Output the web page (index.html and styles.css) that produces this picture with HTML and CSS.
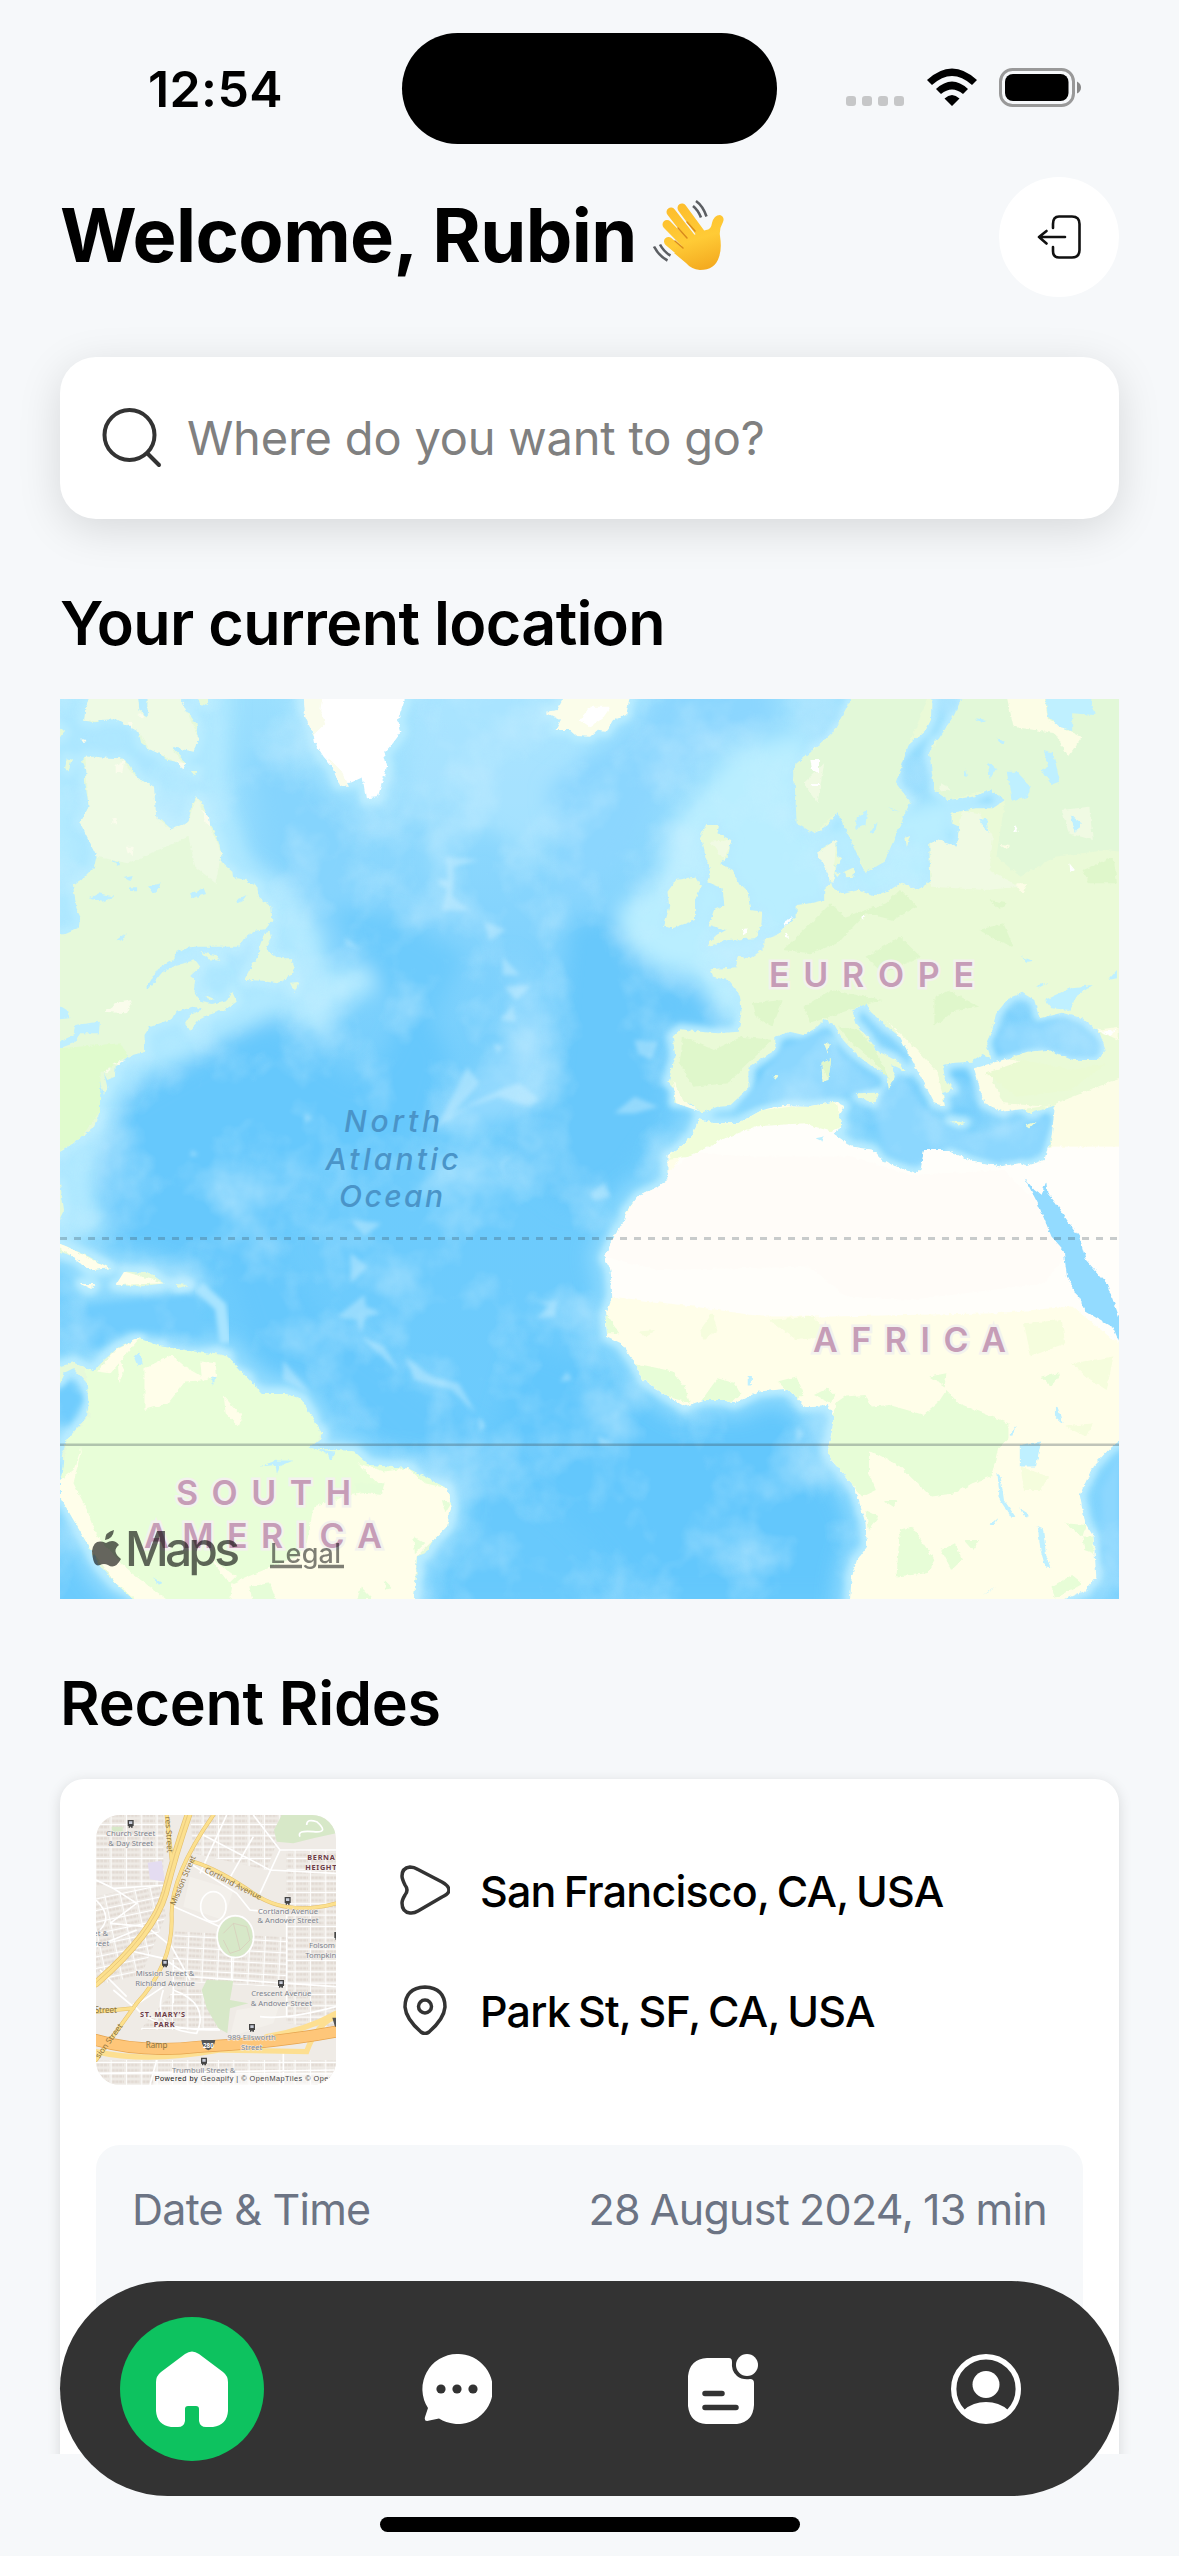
FILE: index.html
```html
<!DOCTYPE html>
<html lang="en">
<head>
<meta charset="utf-8">
<title>Ride Home</title>
<link rel="stylesheet" href="styles.css">
</head>
<body>
<div class="screen">
  <header class="status">
    <div class="time"><span class="t-time">12:54</span></div>
    <div class="island"></div>
    <div class="indicators">
      <div class="dots"><i></i><i></i><i></i><i></i></div>
      <svg class="wifi" viewBox="0 0 52 38"><path d="M1 12Q26-11 51 12L46 17Q26-1 6 17ZM10 21Q26 6 42 21L37 26Q26 17 15 26ZM18.500 30.500Q26 23.500 33.500 30.500L26 38Z"/></svg>
      <svg class="battery" viewBox="0 0 83 40"><rect x="1.500" y="1.500" width="73" height="36" rx="12" fill="none" stroke="#999" stroke-width="3"/><rect x="6" y="6" width="63.500" height="27" rx="8"/><path d="M78 13.500Q82 15.500 82 19.500T78 25.500Z" fill="#888"/></svg>
    </div>
  </header>

  <main class="content">
    <div class="welcome">
      <h1 class="t-title">Welcome, Rubin</h1>
      <svg class="wave" viewBox="0 0 110 110">
        <defs><linearGradient id="skin" gradientUnits="userSpaceOnUse" x1="40" y1="22" x2="62" y2="92"><stop offset="0" stop-color="#fdbd2c"/><stop offset=".55" stop-color="#ffcb36"/><stop offset="1" stop-color="#f3a81e"/></linearGradient></defs>
        <g fill="none" stroke="url(#skin)" stroke-linecap="round">
          <path stroke-width="9" d="M42 28L64 58"/><path stroke-width="9" d="M31 32L56 64"/><path stroke-width="9" d="M27 44.500L50 68"/><path stroke-width="9" d="M28.500 61.500L48 78"/>
        </g>
        <path fill="url(#skin)" d="M40 72L44 60 60 52 66 50Q71 50 72 43Q74 35 80 35Q85 37 83 42Q79 49 80 56Q82 69 79 77Q75 90 60 90Q51 89 46 83L34 73Z"/>
        <path d="M47 42L55 51M38 48L47 58M35 61L43 68" fill="none" stroke="#d98b1c" stroke-width="1.500" stroke-linecap="round"/>
        <g fill="none" stroke="#5c5f63" stroke-width="2.600"><path d="M56 21Q63 26 66.500 36.500M53 26Q58 30 61 37.500M14 66.500Q19 76 27.500 80.500M20 64.500Q24 72 30.500 75.500"/></g>
      </svg>
      <button class="logout"><svg viewBox="0 0 44 44" fill="none" stroke="#111" stroke-width="2.600" stroke-linecap="round" stroke-linejoin="round"><path d="M16 13V9Q16 1.500 22 1.500H35Q42.500 1.500 42.500 9V35Q42.500 42.500 35 42.500H22Q16 42.500 16 36V32M28 22H2M9.500 16L2 22L9.500 28.500"/></svg></button>
    </div>

    <div class="search">
      <svg viewBox="0 0 60 60" fill="none" stroke="#333" stroke-width="4" stroke-linecap="round"><circle cx="27.500" cy="27" r="25"/><path d="M46 46L57 57"/></svg>
      <span class="t-search">Where do you want to go?</span>
    </div>

    <h2 class="t-loc">Your current location</h2>

    <div class="map">
      <svg viewBox="60 699 1059 900">
        <defs>
          <filter id="rough" x="-5%" y="-5%" width="110%" height="110%" color-interpolation-filters="sRGB"><feTurbulence type="fractalNoise" baseFrequency=".07" numOctaves="3" seed="4"/><feDisplacementMap in="SourceGraphic" scale="12" xChannelSelector="R" yChannelSelector="G"/></filter>
          <filter id="soft" x="-20%" y="-20%" width="140%" height="140%"><feGaussianBlur stdDeviation="10"/></filter>
          <filter id="softer" x="-30%" y="-30%" width="160%" height="160%"><feGaussianBlur stdDeviation="30"/></filter>
          <filter id="fine"><feGaussianBlur stdDeviation="7"/></filter>
          <filter id="relief" x="0" y="0" width="100%" height="100%" color-interpolation-filters="sRGB"><feTurbulence type="fractalNoise" baseFrequency=".014" numOctaves="4" seed="9"/><feColorMatrix values="0 0 0 0 .8  0 0 0 0 .94  0 0 0 0 1  1.6 0 0 0 -.72"/></filter>
          <linearGradient id="sea" x1="0" y1="0" x2="0" y2="1"><stop offset="0" stop-color="#9bdffe"/><stop offset=".25" stop-color="#83d3fd"/><stop offset=".5" stop-color="#6dcbfc"/><stop offset="1" stop-color="#6ccbfd"/></linearGradient>
          <g id="america">
            <path d="M95 0L75 55 72 92 105 97 130 82 165 88 172 70 190 90 215 98 232 125 240 158 265 178 290 185 312 208 345 216 370 228 365 208 330 170 300 130 345 150 380 172 395 185 410 140 405 105 380 68 345 45 345 0H260L258 50 262 80 235 62 228 0Z"/>
            <path d="M75 200L110 200 140 212 180 205 210 228 228 265 278 290 275 340 285 385 270 398 300 390 330 418 380 398 388 350 405 318 425 350 445 405 465 440 478 490 475 515 510 545 512 562 550 570 583 590 590 625 625 650 628 690 605 718 578 722 545 745 528 770 390 770 345 785 335 810 290 835 255 895 262 898 300 850 345 825 400 810 415 830 385 858 400 870 395 905 415 935 450 942 495 930 508 902 523 935 490 958 440 975 410 990 385 1022 370 998 385 975 425 958 395 950 345 965 335 985 265 1012 250 1035 252 1085 200 1100 165 1130 162 1160 140 1170 130 1150 140 1190 130 1215 115 1160 105 1180 110 1240 118 1265 100 1310 60 1345 10 1380 -60 1420V735L15 733 55 715 60 680 50 660 38 585 75 560 100 535 110 490 100 430 60 400 85 350 78 300 72 265 80 245 65 210Z"/>
            <path d="M620 725L605 730 590 770 588 800 565 830 545 870 600 872 640 880 665 870 690 850 695 835 682 805 645 805 620 785 610 770 625 745ZM680 878L706 876 694 906ZM415 785L460 795 475 812 440 808ZM430 915L458 928 440 930ZM20 205L35 210 25 242 15 235ZM390 243L408 243 400 256ZM405 25H438V48L410 40ZM-20 100L12 125 0 142-20 140Z"/>
            <path d="M-30 1480H0L12 1560 0 1585-30 1590ZM-30 1650L20 1670 85 1700 148 1735 90 1740 50 1705 0 1685-30 1680ZM190 1745L265 1750 310 1780 235 1790 165 1785 215 1778ZM65 1782L100 1785 90 1796ZM345 1782L378 1785 350 1795Z"/>
            <path d="M-30 2050L0 2030 40 2018 75 2035 100 2045 130 2010 170 1975 235 1945 230 1985 265 1970 300 1970 320 1990 380 2000 460 1990 495 2000 500 2035 555 2065 560 2090 600 2112 670 2112 715 2130 745 2180 752 2210 775 2230 770 2250 740 2275 820 2280 870 2285 915 2325 960 2330 1030 2335 1080 2380 1145 2395 1158 2450 1145 2510 1105 2550 1080 2590 1055 2600 1055 2650 1045 2727V2760H250L240 2720 165 2680 120 2630 80 2560 30 2460 0 2420 5 2360 30 2340 5 2300 20 2250 80 2180 88 2110 80 2080 40 2035 10 2050 0 2080-30 2070Z"/>
          </g>
          <path id="greenland" d="M720 0L725 60 745 100 755 160 780 200 805 230 825 280 860 278 895 262 905 325 940 322 955 270 968 230 958 190 985 160 1010 125 1000 90 1015 45 1030 0Z"/>
          <g id="europe">
            <path d="M772 0L745 60 735 95 705 130 700 150 650 175 635 200 600 230 592 270 640 280 600 290 595 330 610 360 605 400 650 430 680 415 720 365 740 370 755 430 775 480 785 520 800 548 818 530 855 515 870 440 880 405 905 375 930 335 900 300 888 280 890 210 925 165 975 120 990 90 992 0Z"/>
            <path d="M1090 0V60L1055 80 1035 110 1025 140 1000 155 985 190 1000 260 1000 300 1040 330 1110 320 1165 300 1205 330 1170 355 1120 355 1050 368 1050 400 1072 410 1065 470 1030 470 1010 450 985 460 988 575 950 600 905 578 870 600 820 618 780 600 735 612 705 595 690 540 665 500 675 475 715 450 718 495 732 505 712 530 708 570 680 600 680 630 640 640 600 645 600 680 560 715 545 735 505 750 500 780 465 805 428 800 425 832 350 838 358 860 400 870 435 915 440 960 432 1025 370 1030 320 1025 262 1018 240 1040 248 1100 228 1175 248 1200 245 1238 290 1240 325 1268 370 1250 405 1248 460 1195 460 1130 500 1105 538 1080 538 1040 580 1025 620 1035 655 1015 680 990 710 1005 735 1050 775 1095 820 1130 860 1150 868 1200 885 1160 875 1125 918 1145 895 1115 830 1080 805 1040 770 1000 762 960 800 942 815 965 850 1000 900 1040 945 1090 945 1130 975 1180 1000 1240 1030 1248 1025 1210 1055 1198 1030 1165 1025 1125 1060 1118 1110 1115 1140 1095 1165 1108 1150 1060 1168 1020 1180 970 1215 925 1255 908 1290 930 1305 985 1370 968 1430 985 1480 1030 1498 1080 1475 1110 1400 1110 1330 1080 1270 1085 1215 1105 1180 1130 1115 1135 1135 1180 1145 1240 1200 1265 1230 1245 1280 1270 1355 1245 1350 1300 1330 1380V1440H1640V0Z"/>
            <path d="M338 405L375 405 370 430 410 450 400 500 378 520 415 540 430 580 458 605 465 660 500 665 498 700 480 745 400 750 335 770 370 735 395 720 345 705 360 660 390 645 385 595 340 575 350 540 335 500 330 470 320 440ZM250 570L305 560 322 590 305 630 305 690 240 715 215 710 230 650 225 605ZM680 1062L697 1060 690 1088ZM672 1120L700 1108 692 1170 675 1175ZM775 1210L840 1208 828 1240 780 1222ZM1045 1293L1090 1298 1070 1307ZM1262 1307L1294 1296 1275 1316ZM738 545L770 530 765 560 745 562ZM708 545L728 550 718 562ZM915 440L930 435 920 468ZM530 1155H547L538 1166Z"/>
          </g>
          <path id="iceland" d="M-128 65L-95 60-80 30-60 0H120L105 75 70 90 45 125 20 122 0 140-40 138-60 120-100 120-85 90-125 70Z"/>
          <path id="africa" d="M315 1288L360 1300 430 1300 500 1260 560 1245 640 1248 690 1240 712 1235 738 1248 722 1275 732 1310 705 1330 760 1370 820 1380 850 1415 940 1450 960 1440 970 1380 1035 1380 1100 1410 1190 1430 1250 1420 1270 1428 1320 1410 1330 1370 1640 1370V2240L1535 2255 1505 2280 1460 2330 1422 2415 1438 2500 1462 2540 1470 2660 1440 2700 1380 2727V2760H755V2727L760 2660 775 2610 805 2570 800 2500 780 2430 760 2380 700 2310 688 2280 700 2240 710 2180 690 2145 620 2150 590 2110 560 2098 490 2105 420 2140 380 2130 330 2130 275 2150 225 2120 155 2070 130 2020 90 1960 50 1940 45 1880 65 1820 60 1740 42 1705 70 1640 100 1590 105 1565 140 1520 200 1490 225 1470 225 1400 270 1365 300 1330Z"/>
          <clipPath id="inAfrica"><use href="#africa"/></clipPath>
        </defs>
        <rect x="60" y="699" width="1059" height="900" fill="url(#sea)"/>

        <g transform="translate(60 690) scale(.338 .3333)">
          <g filter="url(#softer)">
            <path fill="#b5ebff" d="M-60-40H500L495 300 550 490 600 560 710 580 770 720 790 850 920 820 940 890 800 960 790 1050 660 960 480 1035 370 1110 230 1150 160 1250 120 1370 100 1500 140 1620-60 1700Z"/>
            <path fill="#66c8fc" d="M620 1000L730 1080 880 1180 960 1100 1050 900 1150 1100 1100 1300 900 1450 700 1500 650 1700 800 1900 1000 2050 1200 2200 1300 2250 1000 2300 850 2150 600 2050 500 1750 200 1650 120 1450 180 1250 350 1150Z"/>
            <path fill="#6dcbfc" d="M800 650L950 900 1100 1000 1200 800 1000 680Z"/><path fill="#67c9fc" d="M1150 2300L1568 2250 1700 2730H1060L1180 2500Z"/>
            <path fill="#85d4fd" d="M560 200L760 280 900 400 880 550 760 720 620 500Z"/>
            <path fill="#b0e7ff" opacity=".65" d="M1050-60L1568-60V330L1400 500 1250 400 1150 480 1150 650 1100 500 1200 300 1000 400Z"/>
            <path fill="#a6e1ff" opacity=".6" d="M1330 780L1360 1000 1220 1180 1100 1320 1400 1280 1450 1000Z"/>
          </g>
          <g fill="#a9e5ff" stroke="#a9e5ff" stroke-width="100" stroke-linejoin="round" filter="url(#softer)" opacity=".7"><use href="#america"/><use href="#greenland"/></g>
          <g fill="#b8ecff" stroke="#b8ecff" stroke-width="40" stroke-linejoin="round" filter="url(#soft)"><use href="#america"/><use href="#greenland"/></g>
          <path filter="url(#soft)" fill="#6fccfd" d="M20 1950L80 1850 220 1830 410 1810 420 1940 200 1920 100 1980ZM-20 2110L40 2070 70 2130 20 2210-20 2200Z"/>
          <path filter="url(#fine)" fill="none" stroke="#a8e4ff" stroke-width="34" d="M410 1790L475 1850 490 1960"/>
        </g>
        <g transform="translate(590 690) scale(.3444 .3333)">
          <g filter="url(#softer)">
            <path fill="#b9eeff" d="M420 180L640 120 620 420 1100 300 1000 640 700 660 500 830 440 1020 360 950 300 850 210 840 150 800 90 740 80 660 200 570 240 400 350 260Z"/>
            <path fill="#67c8fb" d="M-60 700L70 680 110 790 200 870 330 920 390 1010 220 1000 200 1300 100 1450-60 1560-260 1400-100 1150Z"/>
            <path fill="#64c7fc" d="M-200 1950L10 2030 130 2090 240 2170 440 2160 560 2120 660 2200 680 2330 760 2500 720 2730H150L-60 2500-300 2300Z"/>
            <path fill="#8bd6fe" d="M280-60H520L540 100 380 150 200 300 100 500-60 640-120 300Z"/>
          </g>
          <g fill="#a9e5ff" stroke="#a9e5ff" stroke-width="90" stroke-linejoin="round" filter="url(#softer)" opacity=".6"><use href="#iceland"/><use href="#africa"/></g>
          <g fill="#b8ecff" stroke="#b8ecff" stroke-width="34" stroke-linejoin="round" filter="url(#soft)"><use href="#europe"/><use href="#iceland"/><use href="#africa"/></g>
          <g filter="url(#soft)" fill="#8cd7fe"><path d="M430 1260L560 1070 680 1020 730 1100 840 1170 830 1190 720 1220 560 1225ZM850 1200L900 1150 960 1230 1020 1310 1120 1330 1250 1290 1340 1280 1310 1390 1190 1420 1050 1370 950 1430 860 1390 830 1300ZM1175 1060L1210 1000 1290 1000 1380 985 1480 1060 1470 1100 1400 1100 1300 1070 1200 1095ZM1540 2290L1480 2400 1490 2620 1540 2700Z"/></g>
        </g>
        <rect x="60" y="699" width="1059" height="900" filter="url(#relief)" opacity=".75"/>
        <g transform="translate(60 690) scale(.338 .3333)" filter="url(#fine)" fill="#d2f2ff" opacity=".42">
          <path d="M1140 500L1240 510 1165 530 1160 620 1210 660 1130 660 1145 600 1115 570 1150 570ZM1255 695L1320 720 1270 750ZM1310 800L1360 855 1310 855ZM1315 890L1395 885 1350 930ZM1340 945L1350 995 1300 990ZM1280 1060L1310 1070 1295 1090ZM840 740L890 780 850 765ZM1205 1130L1240 1180 1130 1310 1220 1240 1300 1200 1360 1180 1420 1230 1390 1250 1300 1220 1180 1260 1110 1320Z"/>
          <path d="M860 1590L950 1600 900 1640ZM860 1690L910 1730 860 1780ZM900 1815L820 1880 760 1870 880 1890 890 1930 905 1880 950 1870 905 1850ZM890 1940L960 1970 1000 2040 930 1980ZM1020 2000L1100 2060 1180 2080 1230 2170 1160 2100 1050 2070ZM1500 2045L1515 2070 1480 2075ZM1240 2180L1260 2210 1240 2225ZM725 1270L745 1285 725 1300ZM390 1380L410 1395 385 1400ZM1350 1385L1310 1420 1320 1470 1300 1420ZM660 2010L740 2110 660 2070Z"/>
          <path d="M1380 1815L1425 1835 1470 1830 1465 1880 1410 1885 1445 1850ZM1700 1050L1770 1055 1750 1110 1710 1090ZM1570 1510L1610 1480 1630 1520 1580 1530ZM1640 1270L1700 1220 1770 1250 1700 1270ZM2180 2210L2200 2230 2180 2260ZM1590 2240L1640 2260 1600 2265Z"/>
        </g>

        <g transform="translate(60 690) scale(.338 .3333)" filter="url(#rough)">
          <use href="#america" fill="#e6f9da"/>
          <path fill="#eefae4" d="M95 0L75 55 72 92 165 88 232 125 265 178 370 228 330 170 395 185 410 140 345 0H260V80L235 62 228 0ZM75 200L180 205 228 265 278 290 285 385 330 418 380 398 405 318 478 490 460 580 400 530 380 440 200 520 110 500 60 400 85 350Z"/>
          <path fill="#e0fbcd" d="M-60 1080L0 1075 180 1060 200 1100 120 1150 118 1265 60 1345-60 1420Z"/>
          <path fill="#e8fed8" d="M75 2035L100 2045 235 1945 300 1970 495 2000 555 2065 600 2112 670 2112 715 2130 775 2230 740 2275 870 2285 915 2325 1030 2335 1145 2395 1158 2450 1055 2600 1045 2760H250L165 2680 80 2560 0 2420 20 2250 88 2180Z"/>
          <path fill="#fffeea" d="M880 2320L960 2345 1030 2335 1080 2380 1145 2395 1158 2450 1145 2510 1055 2600 1045 2760H500L510 2680 580 2650 700 2600 730 2560 750 2450 860 2415 960 2400ZM250 2035L330 1995 370 2030 440 2070 370 2075 320 2140 250 2160ZM415 2015L460 2020 465 2060 420 2070ZM110 2045L165 1980 235 1945 190 2000 150 2050ZM485 2120L540 2180 530 2210 490 2170ZM170 2000L190 2040 175 2080ZM0 2370L40 2340 65 2270 40 2380 80 2460 110 2540 200 2640 330 2740H240L165 2680 80 2560 0 2420ZM-30 1650L20 1670 148 1735 90 1740ZM190 1745L310 1780 165 1785ZM60 1782H105L90 1796ZM440 2600L520 2660 500 2680Z"/>
          <path fill="#e6fdd8" d="M870 2380L960 2380 950 2415 880 2405ZM1130 2430L1158 2440 1140 2470ZM1045 2540L1080 2560 1050 2590ZM960 2670L980 2690 965 2700ZM890 2690L925 2727H880ZM560 2690L620 2680 640 2730H570Z"/>
          <use href="#greenland" fill="#fff"/>
          <path fill="#fafcec" d="M720 0L725 80 750 135 785 100 770 60 780 0ZM795 205L830 290 855 290 830 240ZM200 95L215 100 210 120ZM225 75L250 72 245 85ZM60 145L75 150 70 160ZM340 215L372 220 362 235ZM195 470L218 470 215 495 200 490ZM155 385H168V400H155ZM420 360L440 375 445 410 430 400ZM165 225L190 210 185 245 165 250ZM130 965L165 940 215 930 195 970ZM155 1120L195 1110 170 1125ZM130 1145L150 1135 140 1150Z"/>
          <path fill="#bfefff" d="M150 510L175 518 170 528ZM185 565L215 558 210 572ZM205 592H228V604H208ZM262 590L298 580 290 600 275 612ZM385 610L425 595 432 612 390 625ZM520 630L552 615 540 632 525 640ZM85 625L115 610 160 620 125 635ZM170 750L198 728 180 755ZM-20 935L20 960 28 985-20 990ZM45 1005L118 995 115 1030 60 1030 40 1060-20 1082V1065L40 1035ZM218 2000L235 1985 245 2020 230 2030ZM450 2060L460 2062 452 2088ZM590 2330L640 2312 690 2312 650 2330 642 2355 638 2325ZM735 2270L760 2260 770 2280 815 2285 800 2310 790 2290ZM275 2662L302 2680 290 2685Z"/>
        </g>
        <g transform="translate(590 690) scale(.3444 .3333)" filter="url(#rough)">
          <use href="#europe" fill="#eafad7"/>
          <path fill="#e2f8d8" d="M772 0L705 130 592 230 600 400 650 430 720 365 800 548 855 515 930 335 888 280 925 165 992 0ZM1090 0L1055 80 985 190 1000 300 1040 330 1165 300 1205 330 1180 500 1250 560 1350 500 1500 480 1640 500V0Z"/>
          <path fill="#dff7cb" d="M640 700L700 640 740 680 860 640 900 600 950 650 880 690 800 670 720 760 640 790 560 780ZM800 800L900 740 960 800 850 850ZM1130 720L1200 700 1230 770 1180 750ZM1160 630L1210 640 1190 660ZM1430 540L1520 500 1530 580 1450 580ZM470 940L560 930 530 1010 480 980ZM270 1040L360 1080 440 1040 530 1050 460 1120 400 1180 300 1190 260 1120ZM720 1010L760 1060 820 1110 870 1170 830 1080 780 1020ZM1000 920L1040 900 1130 950 1060 960 1000 1010ZM672 1120L700 1108 692 1170ZM620 950L700 900 850 930 780 950 640 1000Z"/>
          <path fill="#f0fae3" d="M988 460L1010 450 1065 470 1080 360 1130 370 1170 440 1160 540 1250 590 1150 600 990 590ZM660 490L715 450 705 580ZM620 280L680 220 660 340ZM1020 280L1050 300 1015 305ZM1370 360L1450 350 1460 450 1390 430ZM350 455L410 450 390 510Z"/>
          <path fill="#fcfde6" d="M1210 20H1320L1330 90 1430 140 1390 200 1350 130 1230 110ZM860 990L950 1080 1010 1150 1030 1248 1000 1240 945 1130 900 1040ZM1115 1135L1215 1105 1260 1120 1160 1150 1200 1240 1330 1250 1500 1180 1640 1130V1440H1330L1350 1245 1200 1265 1145 1240ZM1470 1020L1535 1010V1050ZM1190 465L1222 468 1205 475ZM1235 580L1270 580 1255 610ZM240 1170L270 1230 320 1265 250 1240Z"/>
          <path fill="#eafad3" d="M1150 1150L1260 1110 1400 1140 1500 1120 1400 1200 1240 1220Z"/>
          <use href="#iceland" fill="#fbfdea"/><path fill="#fff" d="M0 50H60L40 80 0 110-30 90Z"/>
          <use href="#africa" fill="#fffee9"/>
          <g clip-path="url(#inAfrica)">
            <path fill="#fffefa" d="M225 1470L320 1300 720 1300 770 1370H1640V2000L1520 1950 1400 1850 1180 1870 700 1880 500 1880 300 1850 60 1820 40 1680Z"/>
            <path fill="#fffcf8" d="M300 1390L480 1400 760 1400 930 1455 1200 1440 1300 1540 1380 1700 1320 1780 930 1830 740 1820 640 1730 200 1740 40 1700 140 1510Z"/>
            <path fill="#f0fdd9" d="M315 1288L500 1260 712 1235 732 1310 700 1325 620 1300 480 1310 380 1350 290 1400 225 1410Z"/>
            <path fill="#e7fdd7" d="M712 2140L740 2120 800 2115 815 2150 870 2145 970 2175 1010 2140 1035 2100 1070 2140 1215 2200V2245L1185 2275 1165 2360 1110 2380 1060 2410 990 2420 940 2370 900 2330 830 2290 810 2285 810 2350 830 2400 790 2420 700 2310 688 2280 700 2240ZM155 2070L130 2020 175 2030 240 2045 275 2090 290 2140 225 2120ZM325 2130L370 2065 420 2080 440 2110 410 2140ZM545 2075L600 2060 620 2110 600 2130ZM650 2115L690 2095 715 2120 700 2140ZM985 2060L1035 2050 1030 2090ZM900 2520L935 2510 1000 2610 980 2650 890 2660ZM1020 2580L1060 2560 1080 2610 1050 2640ZM1085 2550L1130 2550 1110 2580ZM800 2460L840 2480 810 2520ZM1380 2500L1440 2505 1430 2540ZM1430 2540L1462 2540V2590L1435 2580ZM1340 2690L1400 2655 1430 2680 1350 2727ZM1310 2060L1365 2050 1340 2090ZM850 2430L895 2430 880 2450ZM45 1870L85 1930 50 1930Z"/>
            <path fill="#f5fddd" d="M520 1890L650 1880 700 1940 600 1950ZM320 1920L355 1870 370 1920 330 1950ZM1260 1900L1370 1890 1380 1960 1280 2000ZM1400 2020L1520 2000 1500 2100 1440 2060ZM1380 2210L1460 2200 1440 2240ZM1250 2330L1330 2360 1310 2400 1260 2400ZM140 1925L190 1920 160 1940Z"/>
          </g>
          <path fill="#93dbff" d="M1262 1465L1290 1500 1310 1515 1325 1475 1328 1510 1345 1530 1385 1590 1420 1640 1440 1710 1500 1780 1540 1890V1965L1520 1915 1440 1865 1385 1760 1375 1680 1340 1640 1300 1540Z"/>
          <path fill="#bff0ff" d="M1210 245H1240L1280 290 1270 320 1225 335ZM1318 180L1345 190 1365 275 1340 285 1312 240 1330 230ZM1320 0L1450 0 1465 75 1400 70 1400 120 1360 110 1330 80ZM775 380L805 362 800 405 770 418ZM812 430L835 395 828 425ZM1130 390L1150 385 1158 430ZM1395 375L1428 400 1410 428ZM1320 930L1400 892 1460 885 1410 920 1395 960 1340 955ZM1290 890L1335 875 1300 895ZM1090 235L1098 255 1088 265ZM1180 145L1205 155 1195 165ZM1155 215L1180 235 1160 270ZM1120 85L1150 90 1135 98ZM865 350L900 365 880 360ZM1505 870L1530 840V865ZM1250 798L1285 812 1270 815ZM1248 2265L1310 2255 1295 2330 1248 2330ZM1183 2350L1192 2360 1202 2430 1235 2480 1225 2485 1190 2430ZM1300 2508L1315 2515 1325 2600 1337 2632 1322 2630 1308 2580ZM1245 2455L1275 2475 1265 2480ZM1350 2150L1358 2152 1372 2200 1350 2180ZM1218 2235L1240 2205 1225 2240ZM1160 2505L1185 2482 1170 2505ZM458 2058H470V2087H458ZM655 1345L680 1340 675 1355ZM1140 2715L1180 2692 1155 2705Z"/>
          <path fill="#fff" d="M640 210H665V250L645 240ZM640 282H665V288H645ZM570 690L590 680 560 715ZM568 725L578 745 565 740ZM440 718L458 715 450 735ZM1235 405L1245 425 1232 425ZM1392 520L1408 540 1395 548ZM1480 1025L1530 1020 1510 1035ZM785 678H800L790 685Z"/>
        </g>
        <path d="M60 1238.500H1119" stroke="#3b4a55" stroke-opacity=".28" stroke-width="3" stroke-dasharray="7 7"/>
        <path d="M60 1444.800H1119" stroke="#3b4a55" stroke-opacity=".32" stroke-width="2.500"/>
        <g class="map-ocean" text-anchor="middle"><text x="392" y="1132" textLength="96">North</text><text x="392" y="1170" textLength="133">Atlantic</text><text x="391" y="1207" textLength="104">Ocean</text></g>
        <g class="map-land"><text x="769" y="987" textLength="205">EUROPE</text><text x="813" y="1352" textLength="193">AFRICA</text><text x="176" y="1505" textLength="175">SOUTH</text><text x="144" y="1548" textLength="238">AMERICA</text></g>
        <g fill="#000" opacity=".6">
          <path d="M114 1530Q113 1539 105 1540Q105 1532 114 1530ZM106 1543Q114 1538 119 1545Q111 1551 121 1559Q115 1570 108 1565Q104 1563 100 1565Q93 1568 92 1551Q94 1538 106 1543Z"/>
          <text class="map-brand" x="125" y="1566" textLength="115">Maps</text>
        </g>
        <g opacity=".5"><text class="map-legal" x="270" y="1563" textLength="71">Legal</text><path d="M270 1566.500H302M318 1566.500H344" stroke="#000" stroke-width="3.500"/></g>
      </svg>
    </div>

    <h2 class="t-recent">Recent Rides</h2>

    <div class="rides">
      <article class="ride">
        <div class="ride-top">
          <svg class="thumb" viewBox="48 75 720 810">
            <defs><pattern id="blocks" width="46" height="34" patternUnits="userSpaceOnUse"><rect width="46" height="34" fill="#efebe6"/><path d="M4 9H40M4 25H40" stroke="#e2dad3" stroke-width="8" stroke-dasharray="9 2"/><path d="M0 1H46M1 0V34" stroke="#fff" stroke-width="3"/></pattern></defs>
            <rect x="48" y="75" width="720" height="810" fill="#efebe6"/>
            <g fill="url(#blocks)"><path d="M620 180H768V720L620 700Z"/><path d="M330 75H620L560 240 340 190Z"/><path transform="rotate(-12 150 400)" d="M20 300H260V400L150 560H20Z"/><path transform="rotate(3 400 500)" d="M280 430H620V580H280Z"/><path d="M48 75H250V290H48ZM300 580L380 600 420 720H180ZM48 810H768V885H48Z"/></g>
            <g fill="#d7e8c8"><path d="M605 75H768V130L700 145 640 160 590 155 582 120Z"/><ellipse cx="466" cy="440" rx="52" ry="60"/><path d="M380 570L460 572 450 630 505 640 450 655 442 730 415 715 380 655 365 600ZM95 110H128V125H95Z"/></g>
            <path fill="#e4dcf1" d="M203 218L245 212 255 275 210 268Z"/><path fill="#f3f0eb" d="M330 260L460 300 430 390 310 350ZM470 660L600 640 580 700 450 740Z"/>
            <g fill="none" stroke="#fff" stroke-width="5"><ellipse cx="466" cy="440" rx="55" ry="63"/><ellipse cx="400" cy="350" rx="38" ry="45"/><path d="M48 270L100 295 260 285M100 295L170 340 90 400M48 330Q100 380 60 420M90 400L200 410 275 470 330 570M270 345L420 410M330 220L470 310 510 360 620 370M360 130L570 240 768 250M520 75L600 180 768 180M440 75L360 250M520 140L440 280M600 180L540 310M48 470L170 420M100 600L160 650 250 590M60 540L140 620M140 480L250 505 330 560 768 590M455 500V570M620 370V680M250 600Q210 720 350 730Q390 640 280 600M280 510V640M160 640Q200 720 420 720M660 140Q650 120 700 125T710 95Q680 85 680 105M48 850L768 840M230 810L210 885M610 790V885M540 680Q620 690 768 650"/></g>
            <path fill="none" stroke="#d8c9b9" stroke-width="2" d="M430 430L460 400 500 410 510 450 480 480 450 490 430 450M460 400L480 480"/>
            <g fill="none" stroke-linecap="round"><g stroke="#e5c16f"><path stroke-width="23" d="M325 75Q285 190 255 310Q220 430 48 580"/><path stroke-width="12" d="M260 75L275 210M400 75Q270 260 275 380Q280 520 170 640L48 810M340 215Q420 240 520 310T768 340M48 665L160 655"/></g><g stroke="#fce08e"><path stroke-width="19" d="M325 75Q285 190 255 310Q220 430 48 580"/><path stroke-width="9" d="M260 75L275 210M400 75Q270 260 275 380Q280 520 170 640L48 810M340 215Q420 240 520 310T768 340M48 665L160 655"/></g><path stroke="#dfbc74" stroke-width="2" d="M323 75Q283 190 252 310Q218 430 48 578"/>
            <path stroke="#fddf91" stroke-width="16" d="M48 785Q200 820 420 780L680 785Q710 700 768 680M560 740Q680 720 768 670"/><path stroke="#e6a44e" stroke-width="36" d="M48 750Q180 790 360 770Q580 760 768 725"/><path stroke="#fec679" stroke-width="32" d="M48 750Q180 790 360 770Q580 760 768 725"/></g>
            <g class="th-stop" text-anchor="middle"><text x="152" y="139">Church Street</text><text x="152" y="168">&amp; Day Street</text><text x="624" y="371">Cortland Avenue</text><text x="624" y="400">&amp; Andover Street</text><text x="255" y="558">Mission Street &amp;</text><text x="255" y="587">Richland Avenue</text><text x="604" y="619">Crescent Avenue</text><text x="604" y="648">&amp; Andover Street</text><text x="515" y="751">989 Ellsworth</text><text x="515" y="780">Street</text><text x="371" y="849">Trumbull Street &amp;</text><text x="726" y="475">Folsom</text><text x="728" y="504">Tompkins</text><text x="62" y="438">et &amp;</text><text x="66" y="467">reet</text></g>
            <g class="th-road"><text transform="translate(285 348) rotate(-67)">Mission Street</text><text transform="translate(372 245) rotate(27)">Cortland Avenue</text><text transform="translate(256 80) rotate(87)">res Street</text><text transform="translate(58 806) rotate(-54)">sion Street</text><text x="44" y="670">Street</text><text x="197" y="774">Ramp</text></g>
            <g class="th-area"><text x="682" y="210">BERNAL</text><text x="676" y="240">HEIGHTS</text><text x="180" y="681">ST. MARY'S</text><text x="221" y="711">PARK</text></g>
            <g fill="#454545"><path id="bus" d="M143 90H161V108H158V113H153V110H150V113H146V108H143Z"/><use href="#bus" x="471" y="231"/><use href="#bus" x="103" y="419"/><use href="#bus" x="451" y="480"/><use href="#bus" x="364" y="612"/><use href="#bus" x="220" y="713"/><use href="#bus" x="620" y="336"/></g>
            <path fill="#e9efff" opacity=".8" d="M147 94H157V102H147ZM618 325H628V333H618ZM250 513H260V521H250ZM598 574H608V582H598ZM511 706H521V714H511ZM367 807H377V815H367Z"/>
            <path fill="#555" d="M364 750H406Q402 775 385 781Q367 775 364 750ZM757 683H780V710H765Z"/><text class="th-shield" x="369" y="773">280</text>
            <path fill="#fff" opacity=".65" d="M220 848H768V885H220Z"/>
            <text class="th-credit" x="224" y="872" textLength="530"><tspan fill="#111">Powered by</tspan> Geoapify | © OpenMapTiles © Oper</text>
          </svg>
          <div class="stops">
            <div class="stop"><svg viewBox="0 0 50 50" fill="none" stroke="#333" stroke-width="3.500" stroke-linejoin="round"><path d="M10 2Q14 2 18 4.500L42 17Q49 21 49 25T42 32L18 46Q14 48.500 10 48Q2 47 2 38Q2 35 5 30Q9 25 5 20Q2 14 2 11Q2 3 10 2Z"/></svg><span class="t-from">San Francisco, CA, USA</span></div>
            <div class="stop"><svg viewBox="0 0 50 50" fill="none" stroke="#333" stroke-width="3.500" stroke-linejoin="round"><path d="M25 2Q45 3 45 22Q44 34 29 47Q25 50 21 47Q6 34 5 22Q5 3 25 2Z"/><circle cx="25" cy="21.500" r="6.500"/></svg><span class="t-to">Park St, SF, CA, USA</span></div>
          </div>
        </div>
        <div class="details"><span class="t-dk">Date &amp; Time</span><span class="t-dv">28 August 2024, 13 min</span></div>
      </article>
    </div>
  </main>

  <nav class="tabs">
    <a class="tab active"><svg viewBox="0 0 72 76" fill="#fff"><path d="M29 3Q36-2 43 3L67 21Q72 25 72 31V60Q71 74 57 76H50Q44 76 43 70V58Q43 55 40 55H32Q29 55 29 58V70Q28 76 22 76H15Q1 74 0 60V31Q0 25 5 21Z"/></svg></a>
    <a class="tab"><svg viewBox="0 0 70 70"><path fill="#fff" d="M35 0A35 35 0 1 1 17 64.500L5 67Q2 67 3 63L6 54A35 35 0 0 1 35 0Z"/><g fill="#333"><circle cx="19" cy="35" r="4.600"/><circle cx="35" cy="35" r="4.600"/><circle cx="51" cy="35" r="4.600"/></g></svg></a>
    <a class="tab doc"><svg viewBox="0 0 70 70"><path fill="#fff" d="M19 4H41Q44 4 44 8Q43 17 49 22Q54 26 62 25Q66 25 66 29V51Q65 68 49 70H18Q2 69 0 52V22Q2 5 19 4Z"/><circle cx="59" cy="11" r="11" fill="#fff"/><path d="M17 39.500H34M17 53.500H48" stroke="#333" stroke-width="5.500" stroke-linecap="round"/></svg></a>
    <a class="tab profile"><svg viewBox="0 0 70 70"><circle cx="35" cy="35" r="32.300" fill="none" stroke="#fff" stroke-width="5.400"/><circle cx="35" cy="30.500" r="13.500" fill="#fff"/><path fill="#fff" d="M13 56Q22 48 35 48T57 56Q47 67 35 68T13 56Z"/></svg></a>
  </nav>
  <div class="home-bar"></div>
</div>
</body>
</html>
```
FILE: styles.css
```css
* { box-sizing: border-box; margin: 0; padding: 0; }
body { background: #f6f8fa; }
.screen {
  width: 1179px; height: 2556px; overflow: hidden; background: #f6f8fa;
  color: #000; font-family: Inter, "Noto Sans", sans-serif; white-space: nowrap;
  display: flex; flex-direction: column; position: relative;
}
svg { display: block; flex: none; }

.status { height: 177px; flex: none; padding-top: 33px; display: grid; grid-template-columns: 402px 375px 1fr; align-items: start; }
.time { height: 111px; padding-left: 148px; display: flex; align-items: center; }
.t-time { font-size: 50px; line-height: 60px; font-weight: 600; letter-spacing: .4px; }
.island { height: 111px; border-radius: 56px; background: #000; }
.indicators { display: flex; align-items: flex-end; height: 74px; padding-left: 69px; }
.dots { display: flex; gap: 6px; width: 80px; padding-bottom: 1px; }
.dots i { width: 10px; height: 10px; border-radius: 3px; background: #c6c7c8; }
.wifi { width: 52px; height: 38px; margin-bottom: 1px; }
.battery { width: 83px; height: 40px; margin-left: 21px; margin-bottom: -1px; }

.content { padding: 0 60px; flex: none; }
.welcome { height: 120px; display: flex; align-items: center; }
.t-title { font-size: 74px; line-height: 90px; font-weight: 700; width: 580px; letter-spacing: -.6px; margin-top: -5px; }
.wave { width: 110px; height: 110px; margin-top: -4px; }
.logout { width: 120px; height: 120px; border: 0; border-radius: 50%; background: #fff; margin-left: auto; padding-left: 38px; }
.logout svg { width: 44px; height: 44px; }

.search { height: 162px; margin-top: 60px; background: #fff; border-radius: 36px; padding-left: 42px; display: flex; align-items: center; box-shadow: 0 10px 44px rgba(0, 0, 0, .13); }
.search svg { width: 60px; height: 60px; }
.t-search { margin-left: 25px; font-size: 47px; line-height: 60px; letter-spacing: -.2px; color: #808080; }

h2 { font-size: 61px; line-height: 80px; font-weight: 600; }
.t-loc { margin-top: 64px; letter-spacing: -.65px; }
.map { height: 900px; margin-top: 36px; }
.map svg { width: 1059px; height: 900px; }
.map-ocean { font-size: 30px; font-weight: 500; font-style: italic; fill: #4a94c8; }
.map-land { font-size: 34px; font-weight: 600; fill: #c69db7; stroke: #f3f2ee; stroke-width: 5px; paint-order: stroke; }
.map-brand { font-size: 48px; font-weight: 500; }
.map-legal { font-size: 27px; font-weight: 500; }
.t-recent { margin-top: 64px; letter-spacing: -.3px; }

.rides { height: 695px; margin: 16px -30px 0; padding: 20px 30px 0; overflow: hidden; }
.ride { height: 800px; background: #fff; border-radius: 24px; padding: 36px; box-shadow: 0 3px 14px rgba(0, 0, 0, .13); }
.ride-top { display: flex; height: 270px; }
.thumb { width: 240px; height: 270px; border-radius: 24px; }
.th-stop { font: 23px "Noto Sans", sans-serif; fill: #7b818b; stroke: #f4f1ee; stroke-width: 3px; paint-order: stroke; }
.th-road { font: 24px "Noto Sans", sans-serif; fill: #8b733f; }
.th-area { font: 700 22px "Noto Sans", sans-serif; letter-spacing: 2px; fill: #6c3c46; stroke: #f4f1ee; stroke-width: 3px; paint-order: stroke; }
.th-shield { font: 700 19px "Noto Sans", sans-serif; fill: #fff; }
.th-credit { font: 22px "Liberation Sans", sans-serif; fill: #444; }
.stops { padding: 15px 0 0 64px; }
.stop { height: 120px; display: flex; align-items: center; }
.stop svg { width: 50px; height: 50px; }
.stop span { margin: 2px 0 0 30px; font-size: 43px; line-height: 60px; font-weight: 500; letter-spacing: -.8px; word-spacing: -2.700px; }
.details { height: 400px; margin-top: 60px; padding: 34px 36px; border-radius: 24px; background: #f6f8fa; display: flex; justify-content: space-between; font-size: 43px; line-height: 60px; color: #6c7484; }
.t-dk { letter-spacing: -.75px; }
.t-dv { letter-spacing: -.7px; word-spacing: -1.500px; }

.tabs { position: absolute; left: 60px; top: 2281px; width: 1059px; height: 215px; border-radius: 108px; background: #333; display: grid; grid-template-columns: repeat(4, 1fr); align-items: center; justify-items: center; }
.tab { width: 144px; height: 144px; border-radius: 50%; display: flex; align-items: center; justify-content: center; }
.tab svg { width: 70px; height: 70px; }
.tab.active { background: #0dc25f; }
.tab.active svg { width: 72px; height: 76px; }
.tab.doc svg { margin-left: 3px; }
.tab.profile svg { margin-right: 2px; }
.home-bar { position: absolute; left: 380px; top: 2517px; width: 420px; height: 15px; border-radius: 8px; background: #000; }
```
